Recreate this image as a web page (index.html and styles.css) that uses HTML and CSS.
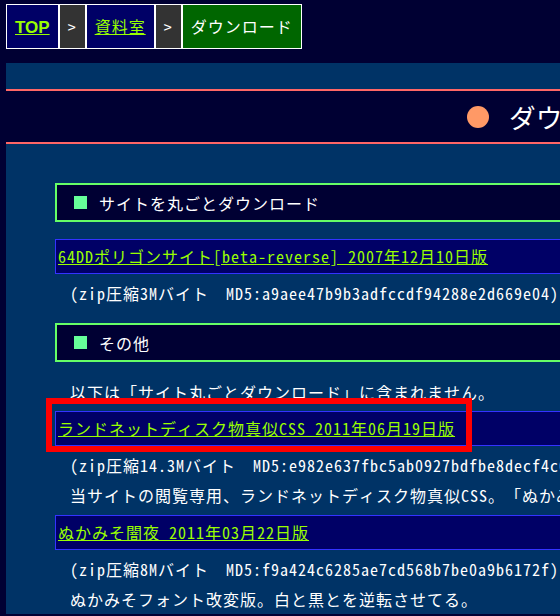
FILE: index.html
```html
<!DOCTYPE html>
<html lang="ja">

<head>
  <meta charset="UTF-8" />
  <title>ダウンロード</title>
  <link rel="stylesheet" href="styles.css">
</head>

<body>
  <!-- パンくず -->
  <nav class="path">
    <ol>
      <li class="top"><a href="#">TOP</a></li>
      <li class="sep">&gt;</li>
      <li class="dir"><a href="#">資料室</a></li>
      <li class="sep">&gt;</li>
      <li class="now">ダウンロード</li>
    </ol>
  </nav>

  <!-- 内容 -->
  <main class="cont">
    <h2 class="ttl"><span class="dot"></span>ダウンロード</h2>

    <section class="sec">
      <h3 class="sub">サイトを丸ごとダウンロード</h3>
      <dl class="dl">
        <dt><a href="#">64DDポリゴンサイト[beta-reverse] 2007年12月10日版</a></dt>
        <dd>(zip圧縮3Mバイト　MD5:a9aee47b9b3adfccdf94288e2d669e04)</dd>
      </dl>
    </section>

    <section class="sec">
      <h3 class="sub">その他</h3>
      <p class="note">以下は「サイト丸ごとダウンロード」に含まれません。</p>
      <dl class="dl">
        <dt>
          <a href="#">ランドネットディスク物真似CSS 2011年06月19日版</a>
          <!-- 赤枠 -->
          <span class="mark"></span>
        </dt>
        <dd>(zip圧縮14.3Mバイト　MD5:e982e637fbc5ab0927bdfbe8decf4c0d)<br>当サイトの閲覧専用、ランドネットディスク物真似CSS。「ぬかみそ闇夜」と併せてどうぞ。</dd>
        <dt><a href="#">ぬかみそ闇夜 2011年03月22日版</a></dt>
        <dd>(zip圧縮8Mバイト　MD5:f9a424c6285ae7cd568b7be0a9b6172f)<br>ぬかみそフォント改変版。白と黒とを逆転させてる。</dd>
      </dl>
    </section>
  </main>
</body>

</html>
```

FILE: styles.css
```css
/* 초기화 */
html,
body {
  margin: 0;
  padding: 0;
  overflow: hidden;
}

body {
  padding: 4px 0 0 6px;
  background-color: #000033;
  color: #fff;
  font-family: "Noto Sans Mono CJK JP", "Noto Sans CJK JP", monospace;
  /* 全角17px・半角9px になるように */
  font-size: 16px;
  letter-spacing: 1px;
  /* 句読点を詰めない */
  text-spacing-trim: space-all;
}

/* パンくず */
.path ol {
  display: flex;
  margin: 0;
  padding: 0;
  list-style: none;
}

.path li {
  height: 43px;
  line-height: 43px;
  padding: 0 8px;
  border: 1px solid;
}

.path a {
  color: #99ff00;
}

.top,
.dir {
  background-color: #000066;
  border-color: #0099ff;
}

.top a {
  font-family: "Liberation Sans", Arial, sans-serif;
  font-weight: bold;
  font-size: 17px;
  letter-spacing: 0;
}

.sep {
  background-color: #333;
  border-color: #999;
}

.now {
  background-color: #006600;
  border-color: #00cc00;
}

/* 内容ボックス - 画面より広い */
.cont {
  box-sizing: border-box;
  width: 1124px;
  height: 551px;
  margin-top: 14px;
  padding-top: 26px;
  overflow: hidden;
  background-color: #003366;
}

/* 大見出し */
.ttl {
  display: flex;
  align-items: center;
  justify-content: center;
  gap: 20px;
  height: 51px;
  margin: 0 0 39px;
  border-top: 2px solid #ff6666;
  border-bottom: 2px solid #ff6666;
  background-color: #000033;
  font-size: 20pt;
  font-weight: normal;
  letter-spacing: 0;
}

.dot {
  width: 22px;
  height: 22px;
  border-radius: 50%;
  background-color: #ff9966;
}

/* セクション */
.sec {
  margin: 0 0 15px 49px;
}

.sub {
  display: flex;
  align-items: center;
  gap: 12px;
  height: 35px;
  margin: 0 0 15px;
  padding-left: 17px;
  border: 2px solid #66ff66;
  background-color: #000033;
  font-size: 16px;
  font-weight: normal;
}

/* 四角マーク */
.sub::before {
  content: '';
  width: 13px;
  height: 13px;
  background-color: #66ff99;
}

.note {
  margin: 0 0 2px 15px;
  line-height: 30px;
}

.dl {
  margin: 0;
  padding-top: 2px;
}

.dl dt {
  position: relative;
  height: 33px;
  line-height: 33px;
  margin-bottom: 4px;
  padding-left: 2px;
  border: 1px solid #3333ff;
  background-color: #000066;
}

.dl dt a {
  color: #99ff00;
}

.dl dd {
  margin: 0 0 5px 15px;
  line-height: 30px;
  white-space: nowrap;
}

/* 赤枠(注目) */
.mark {
  position: absolute;
  top: -14px;
  left: -10px;
  box-sizing: border-box;
  width: 426px;
  height: 54px;
  border: 6px solid #ff0000;
  pointer-events: none;
}
```
